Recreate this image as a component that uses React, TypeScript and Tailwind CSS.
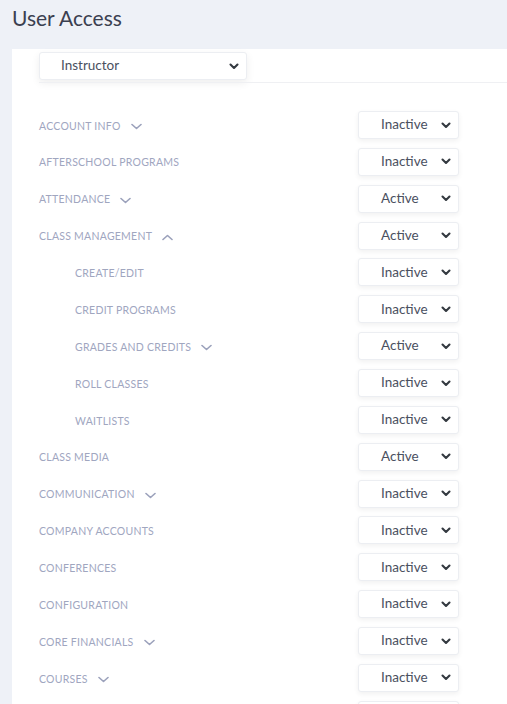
import React from "react";

type Row = {
  label: string;
  value: "Active" | "Inactive";
  sub?: boolean;
  caret?: "down" | "up";
};

const rows: Row[] = [
  { label: "Account Info", value: "Inactive", caret: "down" },
  { label: "Afterschool Programs", value: "Inactive" },
  { label: "Attendance", value: "Active", caret: "down" },
  { label: "Class Management", value: "Active", caret: "up" },
  { label: "Create/Edit", value: "Inactive", sub: true },
  { label: "Credit Programs", value: "Inactive", sub: true },
  { label: "Grades and Credits", value: "Active", sub: true, caret: "down" },
  { label: "Roll Classes", value: "Inactive", sub: true },
  { label: "Waitlists", value: "Inactive", sub: true },
  { label: "Class Media", value: "Active" },
  { label: "Communication", value: "Inactive", caret: "down" },
  { label: "Company Accounts", value: "Inactive" },
  { label: "Conferences", value: "Inactive" },
  { label: "Configuration", value: "Inactive" },
  { label: "Core Financials", value: "Inactive", caret: "down" },
  { label: "Courses", value: "Inactive", caret: "down" },
];

function SelectChevron() {
  return (
    <svg width="10" height="7" viewBox="0 0 10 7" className="shrink-0">
      <polyline
        points="1.5,1.5 5,5 8.5,1.5"
        fill="none"
        stroke="#343a40"
        strokeWidth="2.1"
        strokeLinecap="round"
        strokeLinejoin="round"
      />
    </svg>
  );
}

function LabelCaret({ dir }: { dir: "down" | "up" }) {
  return (
    <svg width="11" height="7" viewBox="0 0 11 7" className="ml-[10px] shrink-0">
      <polyline
        points={dir === "down" ? "1,1.5 5.5,5.5 10,1.5" : "1,5.5 5.5,1.5 10,5.5"}
        fill="none"
        stroke="#9ba1bb"
        strokeWidth="1.6"
        strokeLinecap="round"
        strokeLinejoin="round"
      />
    </svg>
  );
}

function StatusSelect({ value }: { value?: string }) {
  return (
    <div className="flex h-[28px] w-[101px] items-center rounded-[3px] border border-[#eceef2] bg-white pl-[22px] pr-[7px] shadow-[0_2px_5px_rgba(0,0,0,0.06)]">
      <span className="flex-1 text-[13.5px] leading-none text-[#4a5060]">{value}</span>
      <SelectChevron />
    </div>
  );
}

export default function App() {
  return (
    <div
      className="h-[704px] overflow-hidden bg-[#eef1f7]"
      style={{ fontFamily: "Lato, 'Open Sans', sans-serif" }}
    >
      <h1 className="pl-[12px] pt-[5px] h-[49px] text-[21px] leading-[26px] text-[#3b4050]">
        User Access
      </h1>

      <div className="ml-[12px] h-full bg-white">
        <div className="pl-[27px] pt-[3px]">
          <div className="flex h-[28px] w-[208px] items-center rounded-[3px] border border-[#eceef2] bg-white pl-[21px] pr-[7px] shadow-[0_3px_8px_rgba(0,0,0,0.07)]">
            <span className="flex-1 text-[13.5px] leading-none text-[#4a5060]">Instructor</span>
            <SelectChevron />
          </div>
          <div className="mt-[2px] h-px bg-[#eff0f3]" />
        </div>

        <div className="mt-[28px] flex flex-col gap-[8.87px] pl-[27px]">
          {rows.map((r) => (
            <div key={r.label} className="flex h-[28px] items-center">
              <div
                className={`flex w-[319px] items-center pt-[3px] ${r.sub ? "pl-[36px]" : ""}`}
              >
                <span className="text-[10.5px] uppercase tracking-[0.25px] text-[#a0a6bf]">
                  {r.label}
                </span>
                {r.caret && <LabelCaret dir={r.caret} />}
              </div>
              <StatusSelect value={r.value} />
            </div>
          ))}
          {/* next row, only its top edge shows */}
          <div className="flex h-[28px] items-center">
            <div className="w-[319px]" />
            <StatusSelect />
          </div>
        </div>
      </div>
    </div>
  );
}
